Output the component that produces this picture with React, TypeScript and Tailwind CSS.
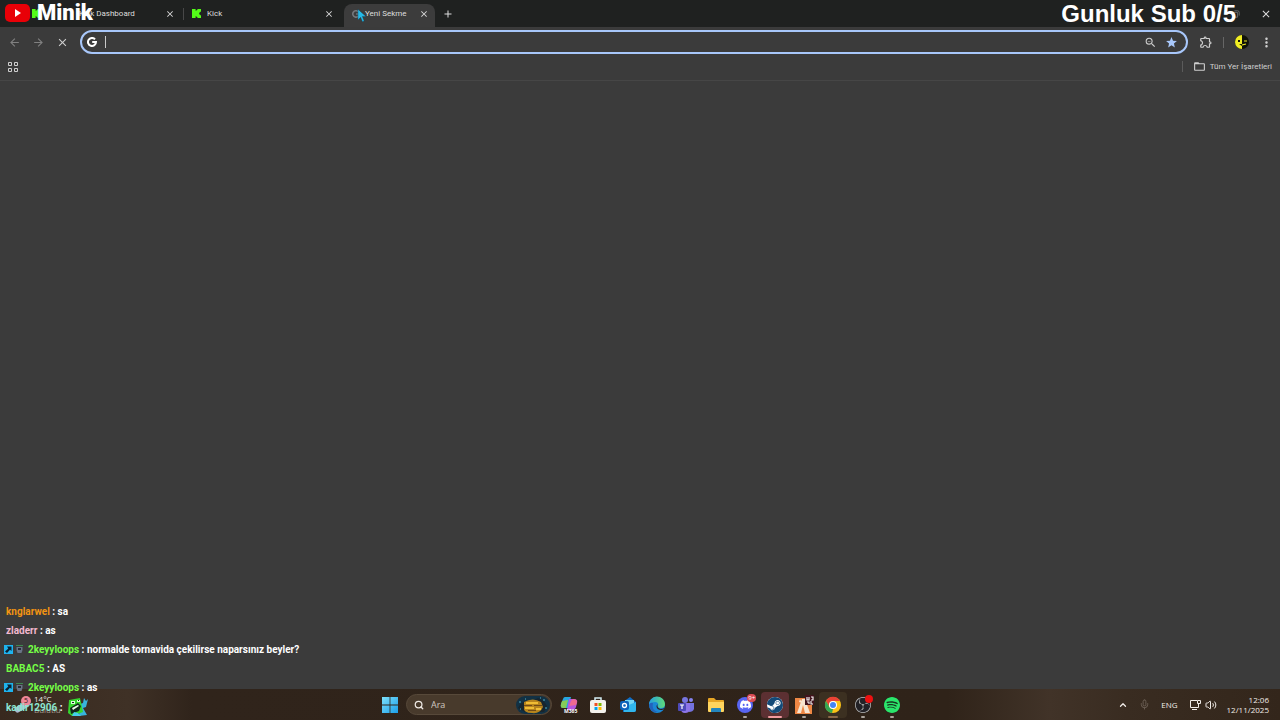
import type { ReactNode } from "react";
import { ChevronUp, Mic, Search, Volume2 } from "lucide-react";
import { MdAdd, MdArrowBack, MdArrowForward, MdClose, MdFolderOpen, MdMoreVert, MdOutlineExtension, MdStar, MdZoomOut } from "react-icons/md";
import { SiDiscord, SiObsstudio, SiSpotify, SiSteam } from "react-icons/si";

const uiFont = "font-['Open_Sans','Noto_Sans',sans-serif]";
const robotoFont = "font-['Roboto',sans-serif]";

function KickIcon() {
  return (
    <svg viewBox="0 0 10 10" className="size-[9px] shrink-0" fill="#53fc18">
      <path d="M0 0h4v2h1V1h1V0h4v3H9v1H8v2h1v1h1v3H6V9H5V8H4v2H0z" />
    </svg>
  );
}

function GoogleIcon({ className }: { className: string }) {
  return (
    <svg viewBox="0 0 10 10" className={className} fill="none" stroke="currentColor" strokeWidth="2">
      <path d="M8 2.3A4 4 0 1 0 9 5H5.2" />
    </svg>
  );
}

function Tab({ title, icon, className, titleClass }: { title: string; icon: ReactNode; className: string; titleClass: string }) {
  return (
    <div className={`flex items-center pl-2 ${className}`}>
      {icon}
      <span className={`flex-1 whitespace-nowrap ${titleClass}`}>{title}</span>
      <button aria-label="Sekmeyi kapat">
        <MdClose size={10} />
      </button>
    </div>
  );
}

function TabStrip() {
  return (
    <div className={`flex h-[27px] items-center bg-[#1f2120] pl-6 text-[8px] text-[#dedede] ${robotoFont}`}>
      <Tab title="Kick Dashboard" icon={<KickIcon />} className="h-4 w-[159px] pr-2" titleClass="ml-[38px]" />
      <Tab title="Kick" icon={<KickIcon />} className="h-3 w-[161px] border-l border-[#484848] pr-[10px]" titleClass="ml-[6px]" />
      <div className="relative self-end">
        <Tab
          title="Yeni Sekme"
          icon={<GoogleIcon className="size-[8px] shrink-0 text-[#74787d]" />}
          className="h-[23px] w-[91px] rounded-t-lg bg-[#3c3c3c] pb-1 pr-[6px]"
          titleClass="ml-[5px]"
        />
        <svg viewBox="0 0 10 14" className="absolute left-[13px] top-[5px] h-[13px] w-[9px]">
          <path d="M1 0v12l3-3 2 5 2-1-2-5h4z" fill="#25b9e8" stroke="#183946" strokeWidth=".4" />
        </svg>
      </div>
      <button aria-label="Yeni sekme" className="ml-[7px]">
        <MdAdd size={12} />
      </button>
      <div className="ml-auto flex items-center gap-[20px] pr-2">
        <button aria-label="Geri yükle">
          <svg viewBox="0 0 10 10" className="size-2" fill="none" stroke="#777">
            <path d="M1 3h6v6H1zM3 1h4q2 0 2 2v4" />
          </svg>
        </button>
        <button aria-label="Kapat">
          <MdClose size={12} />
        </button>
      </div>
    </div>
  );
}

function Toolbar() {
  return (
    <div className="flex h-[30px] items-center pl-2 pr-[6px] text-[#cfcfcf]">
      <div className="flex w-[72px] gap-[11px]">
        <button aria-label="Geri" className="text-[#808080]"><MdArrowBack size={13} /></button>
        <button aria-label="İleri" className="text-[#808080]"><MdArrowForward size={13} /></button>
        <button aria-label="Durdur"><MdClose size={13} /></button>
      </div>
      <label className="flex h-6 flex-1 items-center rounded-full border-2 border-[#a8c7fa] pl-[5px] pr-2">
        <GoogleIcon className="size-[10px] text-white" />
        <span className="ml-2 h-3 w-px bg-[#c9c9c9]" />
        <input aria-label="Adres çubuğu" className="min-w-0 flex-1 bg-transparent text-[10px] outline-none" />
        <MdZoomOut size={13} />
        <MdStar size={13} className="ml-2 text-[#a8c7fa]" />
      </label>
      <button aria-label="Uzantılar" className="ml-[11px]">
        <MdOutlineExtension size={14} />
      </button>
      <span className="ml-[10px] h-[11px] w-px bg-[#666]" />
      <button aria-label="Profil" className="ml-[11px]">
        <svg viewBox="0 0 14 14" className="size-[14px]">
          <circle cx="7" cy="7" r="7" fill="#111309" />
          <path d="M7 0a7 7 0 0 0 0 14z" fill="#f1ee24" />
          <path d="M3 5h2v2H3zM4 9l3 2V9z" fill="#151507" />
          <path d="M9 6h3M7 10l4-1" stroke="#f1ee24" strokeWidth="1.2" />
        </svg>
      </button>
      <button aria-label="Menü" className="ml-[10px]">
        <MdMoreVert size={15} />
      </button>
    </div>
  );
}

function BookmarkBar() {
  return (
    <div className={`flex h-6 items-center border-b border-[#464646] pb-1 px-2 text-[8px] text-[#cfcfcf] ${robotoFont}`}>
      <button aria-label="Gruplar">
        <svg viewBox="0 0 10 10" className="size-[10px]" fill="none" stroke="currentColor">
          <path d="M.5.5h3v3h-3zM6.5.5h3v3h-3zM.5 6.5h3v3h-3zM6.5 6.5h3v3h-3z" />
        </svg>
      </button>
      <span className="ml-auto h-[11px] w-px bg-[#5b5b5b]" />
      <a href="#" className="ml-[10px] flex items-center gap-1 whitespace-nowrap">
        <MdFolderOpen size={13} />
        Tüm Yer İşaretleri
      </a>
    </div>
  );
}

const messages = [
  { user: "knglarwel", text: "sa", color: "text-[#f29412]", badges: false },
  { user: "zladerr", text: "as", color: "text-[#f2b8cf]", badges: false },
  { user: "2keyyloops", text: "normalde tornavida çekilirse naparsınız beyler?", color: "text-[#75fd46]", badges: true },
  { user: "BABAC5", text: "AS", color: "text-[#75fd46]", badges: false },
  { user: "2keyyloops", text: "as", color: "text-[#75fd46]", badges: true },
];

function Badges() {
  return (
    <span className="-ml-[2px] mr-1 flex gap-[2px]">
      <svg viewBox="0 0 9 9" className="size-[9px]">
        <path d="M0 0h9v9H0z" fill="#1eb3ee" />
        <path d="M3 1.5h4.5V6L6 4.7 3 8 1 6.5l3.3-3z" fill="#0b2335" />
      </svg>
      <svg viewBox="0 0 9 9" className="size-[9px]">
        <path d="M1 0h7v1H1z" fill="#3f8650" />
        <path d="M1.5 2h6v3l-1 3h-4l-1-3z" fill="#697386" />
        <path d="M3 3h3v2H3z" fill="#282d37" />
      </svg>
    </span>
  );
}

function Emote() {
  return (
    <svg viewBox="0 0 20 20" className="ml-[3px] size-5">
      <path d="M12 7l3-1 1-5 2 3 2-2-2 8-3 1 4 7-8 1z" fill="#38b4dc" />
      <path d="M1 3l11-2 3 14-11 4-4-3z" fill="#35d62e" />
      <path d="M2 11l8-5 3 3-2 5-8 3z" fill="#10261b" />
      <path d="M4 11l6-3 1 1-6 4z" fill="#eaffe5" />
      <path d="M3 4h4v3H3zM9 3h3v2H9z" fill="#d8ffd4" />
      <path d="M4 5h2v1H4zM10 3h1v1h-1z" fill="#10261b" />
      <path d="M4 19l2-4 4 1 3 3z" fill="#45cdea" />
    </svg>
  );
}

function Chat() {
  return (
    <div className={`absolute bottom-[3px] left-[6px] z-10 text-[10px] font-bold text-white ${robotoFont}`}>
      {messages.map((m, i) => (
        <p key={i} className="flex h-[19px] items-center whitespace-pre">
          {m.badges && <Badges />}
          <span className={m.color}>{m.user}</span> : {m.text}
        </p>
      ))}
      <p className="flex h-5 items-center whitespace-pre">
        <span className="text-[#8ce5d0]">kadir12906</span> : <Emote />
      </p>
    </div>
  );
}

function StreamLabels() {
  return (
    <>
      <div className="absolute left-[5px] top-0 z-10 flex items-center gap-[7px]">
        <svg viewBox="0 0 25 18" className="h-[18px] w-[25px]">
          <rect width="25" height="18" rx="5" fill="#e80007" />
          <path d="M10 5l6 4-6 4z" fill="#fff" />
        </svg>
        <span className={`text-[22px] font-black leading-[26px] text-white ${robotoFont}`}>Minik</span>
      </div>
      <div className="absolute right-[44px] top-0 z-10 whitespace-nowrap font-['Liberation_Sans',sans-serif] text-[24px] font-bold leading-[28px] text-white">
        Gunluk Sub 0/5
      </div>
    </>
  );
}

const copilot = (
  <svg viewBox="0 0 18 18" className="size-[18px]">
    <path d="M5 1h6L8 12H3Q0 12 1 8l2-5q.5-2 2-2" fill="#27a6df" />
    <path d="M2 5l6-1-2 8H3Q0 12 1 8z" fill="#86cc58" />
    <path d="M9 3h5q4 0 3 4l-1 4q-1 3-4 3H7z" fill="#b557df" />
    <path d="M13 3q4 0 4 3l-1 3-7 1 2-5z" fill="#ef6a91" />
    <text x="4" y="17" fontSize="5" fontWeight="700" fill="white" fontFamily="Open Sans, sans-serif">M365</text>
  </svg>
);

const store = (
  <svg viewBox="0 0 18 18" className="size-[18px]">
    <path d="M6 5V2h6v3" fill="none" stroke="#d5edf3" strokeWidth="1.5" />
    <rect x="1" y="4" width="16" height="13" rx="2" fill="#f3f1ec" />
    <path d="M5.5 7h3v3h-3z" fill="#f25022" />
    <path d="M9.5 7h3v3h-3z" fill="#7fba00" />
    <path d="M5.5 11h3v3h-3z" fill="#00a4ef" />
    <path d="M9.5 11h3v3h-3z" fill="#ffb900" />
  </svg>
);

const outlook = (
  <svg viewBox="0 0 18 18" className="size-[18px]">
    <path d="M4 6l7-5 6 5v8q0 2-2 2H4z" fill="#116fc4" />
    <path d="M6 4h9v7H6z" fill="#75d7f5" />
    <path d="M5 11l12-5v8q0 2-2 2H5z" fill="#31b7ed" />
    <rect x="1" y="5" width="9" height="9" rx="2" fill="#0c63b9" />
    <circle cx="5.5" cy="9.5" r="2" fill="none" stroke="white" strokeWidth="1.3" />
  </svg>
);

const edge = (
  <svg viewBox="0 0 18 18" className="size-[18px]">
    <defs>
      <linearGradient id="edgeTop" x2="1">
        <stop stopColor="#249fe0" />
        <stop offset="1" stopColor="#5fdc78" />
      </linearGradient>
    </defs>
    <circle cx="9" cy="9" r="8" fill="#1a87d4" />
    <path d="M1 9a8 8 0 0 1 16-1q0 4-4 4-3 0-3-2 1-4-3-4-4 0-6 3" fill="url(#edgeTop)" />
    <path d="M5 7q-2 7 5 9-8 1-9-7 1-3 4-2" fill="#2362bb" />
    <path d="M9.5 8q-1 4 3 5 2 0 4-1-1 2-3 2-5 0-5-4z" fill="#2b2017" />
  </svg>
);

const teams = (
  <svg viewBox="0 0 18 18" className="size-[18px]">
    <circle cx="8" cy="4" r="3" fill="#7775df" />
    <circle cx="14" cy="4" r="2" fill="#8583ef" />
    <path d="M11 7h6v6q-1 3-5 3z" fill="#7572dd" />
    <path d="M4 7h9v7q-1 3-5 3-4 0-4-4z" fill="#8d75e8" />
    <rect x="1" y="7" width="8" height="8" rx="1" fill="#4e4ab9" />
    <path d="M3 9h4M5 9v4" stroke="white" strokeWidth="1.2" />
  </svg>
);

const explorer = (
  <svg viewBox="0 0 18 18" className="size-[18px]">
    <path d="M1 3q0-1 1-1h5l2 2h7q1 0 1 1v10H1z" fill="#e7a626" />
    <path d="M1 6h16v9q0 1-1 1H2q-1 0-1-1z" fill="#ffd45e" />
    <path d="M4 16v-3q0-1 1-1h8q1 0 1 1v3z" fill="#2385bd" />
  </svg>
);

const discord = (
  <span className="relative flex size-4 items-center justify-center rounded-full bg-[#5865f2] text-white">
    <SiDiscord size={11} />
    <span className="absolute -right-[3px] -top-[3px] rounded-full bg-[#dc4c55] px-px text-[6px] leading-[8px]">9+</span>
  </span>
);

const steam = (
  <span className="flex size-4 items-center justify-center rounded-full bg-white text-[#134a78]">
    <SiSteam size={16} />
  </span>
);

const fivem = (
  <svg viewBox="0 0 20 20" className="size-5">
    <path d="M1 3h17v16H1z" fill="#ee8744" />
    <path d="M8 4h3l5 14h-5L9 10 7 18H3zM8 8L5 7l1-3z" fill="#f7e4cf" />
    <path d="M11 0h9v10h-9z" fill="#42131d" />
    <path d="M13 2v3h2V2m2 0h2v3h-2M13 7h2v2m2-3v3h2" stroke="white" strokeWidth="1.1" fill="none" />
  </svg>
);

const chrome = (
  <svg viewBox="0 0 18 18" className="size-[18px]">
    <circle cx="9" cy="9" r="8" fill="#fbc116" />
    <path d="M2 5a8 8 0 0 1 14 0H9a4 4 0 0 0-3.5 6z" fill="#e94235" />
    <path d="M2 5l3.5 6A4 4 0 0 0 9 13l-1 4A8 8 0 0 1 2 5" fill="#34a853" />
    <circle cx="9" cy="9" r="4" fill="white" />
    <circle cx="9" cy="9" r="3" fill="#4285f4" />
  </svg>
);

const obs = (
  <span className="relative flex size-4 items-center justify-center rounded-full bg-[#222126] text-[#bdbdbd]">
    <SiObsstudio size={16} />
    <span className="absolute -right-[2px] -top-[2px] size-2 rounded-full bg-[#ed1010]" />
  </span>
);

const spotify = (
  <span className="rounded-full bg-[#17351f]">
    <SiSpotify size={16} color="#2be56b" />
  </span>
);

const apps = [
  { name: "Microsoft 365 Copilot", icon: copilot, mark: "", cell: "" },
  { name: "Microsoft Store", icon: store, mark: "", cell: "" },
  { name: "Outlook", icon: outlook, mark: "", cell: "" },
  { name: "Edge", icon: edge, mark: "", cell: "" },
  { name: "Teams", icon: teams, mark: "", cell: "" },
  { name: "Dosya Gezgini", icon: explorer, mark: "", cell: "" },
  { name: "Discord", icon: discord, mark: "w-1 bg-[#aaa39c]", cell: "" },
  { name: "Steam", icon: steam, mark: "w-[14px] bg-[#f29ba0]", cell: "bg-[#5c3032]" },
  { name: "FiveM", icon: fivem, mark: "w-1 bg-[#aaa39c]", cell: "" },
  { name: "Chrome", icon: chrome, mark: "w-[10px] bg-[#8a6849]", cell: "bg-[#3c3021]" },
  { name: "OBS Studio", icon: obs, mark: "w-1 bg-[#aaa39c]", cell: "" },
  { name: "Spotify", icon: spotify, mark: "w-1 bg-[#aaa39c]", cell: "" },
];

function SearchBox() {
  return (
    <label className="mr-[3px] flex h-[21px] w-[146px] items-center rounded-full border border-[#57493a] bg-[#483a2c] pl-[7px] pr-px text-[#eee9e4]">
      <Search size={10} strokeWidth={3} />
      <input aria-label="Ara" placeholder="Ara" className="ml-[7px] min-w-0 flex-1 bg-transparent text-[9px] outline-none placeholder:text-[#d0c8c0]" />
      <svg viewBox="0 0 34 18" className="h-[18px] w-[34px]">
        <rect width="34" height="18" rx="9" fill="#123144" />
        <path d="M2 12q4-8 12-6l8-4q6 2 9 8l-3 6H9z" fill="#17252e" />
        <path d="M8 6q9-5 17 0l2 5q-3 7-11 6-9 0-8-6z" fill="#b7841d" />
        <path d="M10 6h12v2H10zM9 11h9v2H9zM20 12h5v2h-5z" fill="#f0bd35" />
        <path d="M8 9h8v1H8zM18 9h8v1h-8zM12 14h8v1h-8z" fill="#6f4a17" />
        <path d="M3 6h2M27 4h2M4 13h1M29 12h2M9 3h1M24 2h1" stroke="#4cb0c9" />
      </svg>
    </label>
  );
}

function Taskbar() {
  return (
    <footer className="grid h-[31px] grid-cols-[1fr_auto_1fr] items-center bg-[linear-gradient(90deg,#38291e_0%,#3f3126_10%,#30241b_15%,#2f2319_74%,#413328_82%,#392c21_88%,#33261b_100%)] text-[8px] text-[#f0ece8]">
      <div className="flex items-center self-start pl-[14px] pt-1">
        <span className="relative h-4 w-5">
          <span className="absolute left-0 top-2 h-[6px] w-4 -rotate-30 rounded-full bg-[#a7b9cf]" />
          <span className="absolute left-[7px] top-0 size-[10px] rounded-full bg-[#ef8798] text-center text-[7px] leading-[10px] text-[#3b1820]">5</span>
        </span>
        <span className="leading-[11px]">14°C<br /><span className="text-[#a59a90]">Bulutlu</span></span>
      </div>
      <div className="flex items-center pl-[2px]">
        <button aria-label="Başlat" className="mr-[2px] flex w-7 justify-center">
          <svg viewBox="0 0 16 16" className="size-4">
            <defs>
              <linearGradient id="win" x2="1" y2="1">
                <stop stopColor="#7de0fb" />
                <stop offset="1" stopColor="#1b9ee8" />
              </linearGradient>
            </defs>
            <path d="M0 0h7.6v7.6H0zM8.4 0H16v7.6H8.4zM0 8.4h7.6V16H0zM8.4 8.4H16V16H8.4z" fill="url(#win)" />
          </svg>
        </button>
        <SearchBox />
        <div className="flex w-[351px] justify-between">
          {apps.map((app) => (
            <button key={app.name} aria-label={app.name} className={`relative flex h-[26px] w-7 items-center justify-center rounded-sm ${app.cell}`}>
              {app.icon}
              {app.mark && <span className={`absolute bottom-0 h-[2px] rounded-full ${app.mark}`} />}
            </button>
          ))}
        </div>
      </div>
      <div className="flex items-center justify-end pr-[11px]">
        <ChevronUp size={10} strokeWidth={3} />
        <Mic size={11} strokeWidth={2} className="ml-[11px] text-[#6e6258]" />
        <span className="ml-[11px]">ENG</span>
        <svg viewBox="0 0 12 12" className="ml-[11px] size-[12px]" fill="none" stroke="currentColor">
          <path d="M8 1.5H1.5v7h8V6M3 10.5h5M8.5 1.5h3v3h-3zM9.5 4.5V8" />
        </svg>
        <Volume2 size={12} strokeWidth={2} className="ml-1" />
        <time className="ml-[10px] text-right leading-[10px]">12:06<br />12/11/2025</time>
      </div>
    </footer>
  );
}

export default function App() {
  return (
    <div className={`relative flex min-h-screen flex-col overflow-hidden bg-[#3b3b3b] ${uiFont}`}>
      <header>
        <TabStrip />
        <Toolbar />
        <BookmarkBar />
      </header>
      <main className="flex-1" />
      <Taskbar />
      <StreamLabels />
      <Chat />
    </div>
  );
}
